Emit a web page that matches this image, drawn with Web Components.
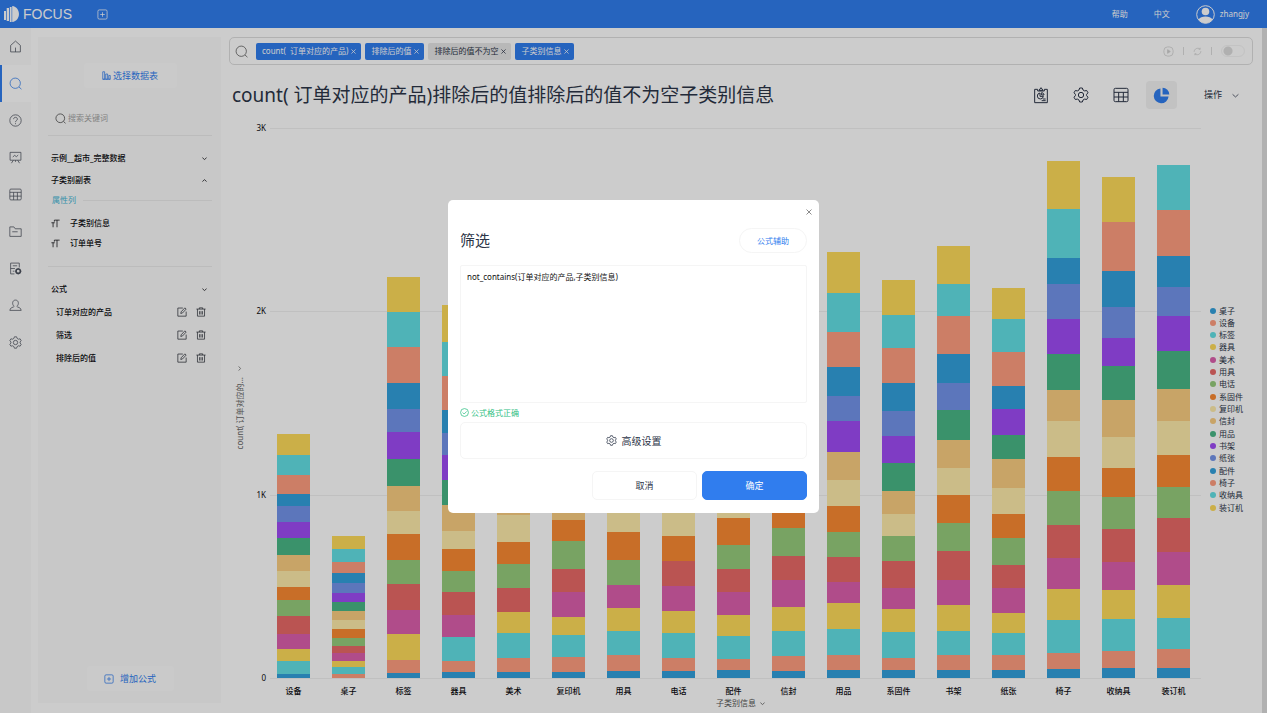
<!DOCTYPE html>
<html lang="zh-CN">
<head>
<meta charset="utf-8">
<title>FOCUS</title>
<style>
  body {
    margin: 0;
    font: 8px/12px "Noto Sans", "Noto Sans CJK SC", sans-serif;
    color: #0c0c10;
    background: #fff;
    --blue: #307dee;
    --ink: #2c3548;
    --soft: #fafafa;
    --line: #ececec;
  }
</style>
</head>
<body>
<focus-app></focus-app>
<script>
const define = (name, html, setup) => {
  const tpl = document.createElement('template');
  tpl.innerHTML = html;
  customElements.define(name, class extends HTMLElement {
    constructor() {
      super();
      this.attachShadow({ mode: 'open' }).append(tpl.content.cloneNode(true));
    }
    connectedCallback() { if (setup) setup(this, this.shadowRoot); }
  });
};

/* Line icons on a 24-unit grid. */
const GEAR = '<path d="M9 4.500 10 1.500h4l1 3 2.500 1.400 3-.7 2 3.500-2.100 2.300v2l2.100 2.300-2 3.500-3-.7L15 19.500l-1 3h-4l-1-3-2.500-1.400-3 .7-2-3.500 2.100-2.300v-2L1.500 8.700l2-3.500 3 .7z"/><circle cx="12" cy="12" r="4"/>';
const ICONS = {
  home: '<path d="M3 10 12 2l9 8v12H3zM12 22v-8"/>',
  search: '<circle cx="11.500" cy="11.500" r="9.500"/><path d="m18.500 18.500 4.500 4"/>',
  help: '<circle cx="12" cy="12" r="10.500"/><path d="M8.500 9.500c0-4.500 7-4.500 7 0 0 2.500-3.500 2.500-3.500 5.500M12 17v1.800"/>',
  board: '<path d="M2 2.500h20v14.500H2zM4.500 22.500 8 17m11.500 5.500L16 17M12 17v3M7 11l3.500-3 3 2.500L17 7.500"/>',
  table: '<rect x="1.500" y="2" width="21" height="20" rx="2"/><path d="M1.500 8h21M1.500 15h21M8.500 8v14M15.500 8v14"/>',
  folder: '<path d="M1.500 21V3.500h7.500l2.500 3.500h11v14zM6 12.500h10"/>',
  doc: '<path d="M19 10V2H3v20h7M7 7h8M3 12h8M7 17h3"/><circle cx="17" cy="17" r="4" stroke-width="3"/><path d="M17 11v2m0 8v2m-6-6h2m8 0h2"/>',
  user: '<path d="M9.500 13.500C5 10 6 2 12 2s7 8 2.500 11.500c0 2 8 1.500 8 7.500h-21c0-6 8-5.500 8-7.500z"/>',
  gear: GEAR,
  plusbox: '<rect x="2" y="2" width="20" height="20" rx="3"/><path d="M12 7v10M7 12h10"/>',
  down: '<path d="m2 8 10 9 10-9"/>',
  up: '<path d="m2 17 10-9 10 9"/>',
  close: '<path d="m2 2 20 20M22 2 2 22"/>',
  bars: '<path d="M2 2v20h5V2zM10 22V8h5v14zM18 22V12h4v10zM2 22h20"/>',
  text: '<path d="M9 3h14M16 3v19M1 10h9M5.500 10v12M9 3v4"/>',
  edit: '<path d="M14 2.500H2V22h20V11M9 15.500l1-4L19 2l3 3-9 9.500z"/>',
  trash: '<path d="M1 5h22M8 5V2h8v3M3.500 5v17h17V5M8.500 10v8M12 10v8M15.500 10v8"/>',
  play: '<rect x="2" y="2" width="20" height="20" rx="8"/><path d="M10 8v8l6-4z" fill="currentColor"/>',
  refresh: '<path d="M3 13C3 5 13 0 19 6V2M21 11c0 8-10 13-16 7v4M19 6h-4M5 18h4"/>',
  clipboard: '<path d="M7 3.500H2.500v20h19v-20H17M9 5l3-4 3 4zM7 3.500V6h10V3.500M10.500 9a4.500 4.500 0 1 0 5 5h-5zM13 8.500c2 0 3.500 1.500 3.500 3.500H13zM15 18h4M13 20.500h6"/>',
  pie: '<path fill="currentColor" stroke="none" d="M10.500 2A10.500 10.500 0 1 0 22 13.500H10.500z"/><path fill="currentColor" stroke="none" d="M13.500 1v9.500H23A9.500 9.500 0 0 0 13.500 1z"/>',
  ok: '<circle cx="12" cy="12" r="10.500"/><path d="m7 12 4 4 7-7"/>'
};
define('ui-icon', `
  <style>
    :host { display: block; flex: none; }
    svg { display: block; width: 100%; height: 100%; fill: none; stroke: currentColor; overflow: visible; }
  </style>
  <svg viewBox="0 0 24 24" aria-hidden="true"></svg>`, (host, root) => {
  const size = Number(host.getAttribute('size') || 12);
  const svg = root.querySelector('svg');
  host.style.width = host.style.height = size + 'px';
  svg.setAttribute('stroke-width', (size > 14 ? 1 : .75) * 24 / size);
  svg.innerHTML = ICONS[host.getAttribute('name')];
});

define('app-header', `
  <style>
    :host { display: flex; align-items: center; height: 28px; background: var(--blue); color: #fff; padding: 0 18px 0 4px; }
    .logo { width: 15px; height: 16px; margin-right: 4px; }
    .brand { font: 14px/28px "Liberation Sans", sans-serif; margin-right: 25px; }
    button { border: 0; background: none; color: inherit; padding: 0; }
    nav { margin-left: auto; display: flex; align-items: center; gap: 26px; }
    a { color: inherit; text-decoration: none; }
    .me { display: flex; align-items: center; gap: 5px; }
  </style>
  <svg class="logo" viewBox="0 0 15 16" aria-hidden="true"><path fill="#fff" d="M0 5h2v9H0zM2.700 2h2.300v13H2.700zM5.800 1h1.800v15H5.800zM8.200 0c9 1 9 15 0 16z"/></svg>
  <span class="brand">FOCUS</span>
  <button aria-label="新建"><ui-icon name="plusbox" size="11"></ui-icon></button>
  <nav>
    <a href="#">帮助</a><a href="#">中文</a>
    <span class="me">
      <svg width="19" height="19" viewBox="0 0 19 19" aria-hidden="true"><circle cx="9.500" cy="9.500" r="8.800" fill="none" stroke="#fff"/><circle cx="9.500" cy="6.500" r="3.800" fill="#fff"/><path fill="#fff" d="M2.500 14.500c2-4 12-4 14 0-3.500 5-10.500 5-14 0z"/></svg>
      <span>zhangjy</span>
    </span>
  </nav>`);

define('nav-rail', `
  <style>
    :host { display: block; width: 31px; background: var(--soft); color: #4c525e; }
    a { display: flex; align-items: center; justify-content: center; height: 37px; color: inherit; }
    a.on { background: #fff; color: var(--blue); box-shadow: inset 2px 0 var(--blue); }
  </style>
  <nav></nav>`, (host, root) => {
  const items = [['home', '首页'], ['search', '搜索'], ['help', '问答'], ['board', '看板'], ['table', '数据表'], ['folder', '资源'], ['doc', '任务'], ['user', '用户'], ['gear', '设置']];
  root.querySelector('nav').innerHTML = items.map(([n, t]) =>
    `<a href="#" aria-label="${t}"${n === 'search' ? ' class="on"' : ''}><ui-icon name="${n}" size="13"></ui-icon></a>`).join('');
});

define('formula-row', `
  <style>
    :host { display: flex; align-items: center; height: 23px; padding: 0 6px 0 8px; }
    span { flex: 1; }
    button { border: 0; background: none; padding: 0; color: #30343c; }
    button + button { margin-left: 9px; }
  </style>
  <span><slot></slot></span>
  <button aria-label="编辑"><ui-icon name="edit" size="10"></ui-icon></button>
  <button aria-label="删除"><ui-icon name="trash" size="10"></ui-icon></button>`);

define('data-panel', `
  <style>
    :host { display: flex; flex-direction: column; box-sizing: border-box; width: 183px; margin: 9px 0 10px 7px; padding: 26px 9px 12px 10px; background: var(--soft); }
    button { font: inherit; color: inherit; border: 0; background: none; padding: 0; display: flex; align-items: center; }
    .action { align-self: center; justify-content: center; height: 25px; font-size: 9px; color: var(--blue); background: #fdfdfd; border-radius: 3px; }
    .pick { width: 93px; gap: 2px; }
    .add { width: 87px; gap: 6px; margin-top: auto; }
    .find { display: flex; align-items: center; gap: 2px; height: 34px; margin-top: 13px; padding-left: 7px; border-bottom: 1px solid var(--line); color: #444; }
    input { border: 0; background: none; padding: 0; font: inherit; min-width: 0; flex: 1; outline: 0; }
    input::placeholder { color: #a4a4a4; }
    .head { width: 100%; height: 22px; padding: 0 5px 0 3px; justify-content: space-between; font-weight: 500; }
    .find + .head, hr + .head { margin-top: 11px; }
    .group { display: flex; align-items: center; gap: 7px; height: 18px; margin-bottom: 4px; padding-left: 4px; color: #45b7d6; }
    .group::after { content: ""; flex: 1; border-top: 1px solid var(--line); }
    .attr { display: flex; align-items: center; gap: 10px; height: 20px; padding-left: 3px; font-weight: 500; }
    hr { border: 0; border-top: 1px solid var(--line); width: 100%; margin: 13px 0 0; }
    formula-row { font-weight: 500; }
  </style>
  <button class="action pick"><ui-icon name="bars" size="9"></ui-icon>选择数据表</button>
  <label class="find"><ui-icon name="search" size="11"></ui-icon><input placeholder="搜索关键词"></label>
  <button class="head">示例__超市_完整数据<ui-icon name="down" size="5"></ui-icon></button>
  <button class="head">子类别副表<ui-icon name="up" size="5"></ui-icon></button>
  <div class="group">属性列</div>
  <div class="attr"><ui-icon name="text" size="9"></ui-icon>子类别信息</div>
  <div class="attr"><ui-icon name="text" size="9"></ui-icon>订单单号</div>
  <hr>
  <button class="head">公式<ui-icon name="down" size="5"></ui-icon></button>
  <formula-row>订单对应的产品</formula-row>
  <formula-row>筛选</formula-row>
  <formula-row>排除后的值</formula-row>
  <button class="action add"><ui-icon name="plusbox" size="10"></ui-icon>增加公式</button>`);

define('query-chip', `
  <style>
    :host { display: flex; align-items: center; gap: 3px; height: 17px; padding: 0 5px 0 6px; border-radius: 2px; background: var(--blue); color: #fff; }
    :host([muted]) { background: #e6e6e6; color: var(--ink); }
    span { white-space: pre; }
    button { border: 0; background: none; padding: 0; color: inherit; }
  </style>
  <span><slot></slot></span><button aria-label="移除"><ui-icon name="close" size="5"></ui-icon></button>`);

define('query-bar', `
  <style>
    :host { display: flex; align-items: center; box-sizing: border-box; height: 28px; padding: 0 7px 0 5px; border: 1px solid #dedede; border-radius: 5px; }
    .find { color: #555; }
    .chips { display: flex; gap: 4px; margin-left: 8px; }
    .chips query-chip { white-space: pre; }
    .tools { display: flex; align-items: center; gap: 9px; margin-left: auto; color: #d0d0d0; }
    .tools button { border: 0; background: none; padding: 0; color: inherit; }
    i { width: 1px; height: 8px; background: #dcdcdc; }
    input { appearance: none; margin: 0; width: 24px; height: 12px; border-radius: 6px; border: 1px solid #f4f4f4; background: radial-gradient(circle at 6px 5px, #dcdcdc 4px, transparent 5px); }
  </style>
  <ui-icon class="find" name="search" size="13"></ui-icon>
  <div class="chips">
    <query-chip>count(&nbsp; 订单对应的产品)</query-chip>
    <query-chip>排除后的值</query-chip>
    <query-chip muted>排除后的值不为空</query-chip>
    <query-chip>子类别信息</query-chip>
  </div>
  <div class="tools">
    <button aria-label="运行"><ui-icon name="play" size="11"></ui-icon></button><i></i>
    <button aria-label="刷新"><ui-icon name="refresh" size="9"></ui-icon></button><i></i>
    <input type="checkbox" role="switch" aria-label="自动">
  </div>`.replace('    .chips query-chip { white-space: pre; }\n', ''));

define('chart-toolbar', `
  <style>
    :host { display: flex; align-items: center; margin-top: 16px; padding: 0 14px 0 3px; color: var(--ink); }
    h1 { flex: 1; margin: 0; font-size: 19px; line-height: 28px; font-weight: 400; white-space: nowrap; }
    .views { display: flex; gap: 9px; margin-right: 27px; }
    button { border: 0; background: none; padding: 0; color: inherit; font: inherit; display: flex; align-items: center; justify-content: center; }
    .views button { width: 31px; height: 28px; border-radius: 4px; }
    .views .on { background: #f3f3f3; color: var(--blue); }
    .ops { font-size: 9px; gap: 10px; }
  </style>
  <h1>count( 订单对应的产品)排除后的值排除后的值不为空子类别信息</h1>
  <div class="views">
    <button aria-label="报告"><ui-icon name="clipboard" size="16"></ui-icon></button>
    <button aria-label="配置"><ui-icon name="gear" size="16"></ui-icon></button>
    <button aria-label="表格"><ui-icon name="table" size="16"></ui-icon></button>
    <button class="on" aria-label="图表"><ui-icon name="pie" size="17"></ui-icon></button>
  </div>
  <button class="ops">操作<ui-icon name="down" size="7"></ui-icon></button>`);

/* Series from the bottom of each stack to its top. */
const C = { B: '#32a1dc', S: '#ff9e80', T: '#63e0e5', Y: '#fedb5a', M: '#dc60ad', R: '#e96967', E: '#97cc7c', O: '#fa8a32', L: '#feecab', N: '#fbcd81', G: '#49b786', P: '#9f4bf5', I: '#7494ea' };
const NAMES = '桌子 设备 标签 器具 美术 用具 电话 系固件 复印机 信封 用品 书架 纸张 配件 椅子 收纳具 装订机'.split(' ');
const SERIES = 'BSTYMREOLNGPIBSTY';
const FULL = 1650;
/* [category, index of the series it leaves out, running totals from the top down] */
const STACKS = [
  ['设备', 1, [733,669,609,552,515,468,421,369,322,273,234,187,132,87,50,11]],
  ['桌子', 0, [426,386,349,315,285,255,228,201,174,147,121,96,74,51,32,13]],
  ['标签', 2, [1203,1098,993,885,806,737,657,577,502,433,355,282,205,131,55,16]],
  ['器具', 3, [1119,1007,907,803,735,669,594,518,442,387,321,258,189,123,51,18]],
  ['美术', 4, [1130,1030,930,835,765,700,630,565,490,407,343,269,199,135,61,18]],
  ['复印机', 8, [1160,1060,960,860,780,705,630,550,474,412,328,258,184,130,63,19]],
  ['用具', 5, [1180,1080,980,885,810,735,660,590,515,437,354,280,211,142,69,20]],
  ['电话', 6, [1170,1070,970,875,800,725,650,580,505,427,351,277,200,135,60,21]],
  ['配件', 13, [1180,1080,980,880,800,720,640,555,480,398,326,257,189,126,56,23]],
  ['信封', 9, [1220,1120,1020,920,840,765,690,615,540,449,367,294,212,140,67,22]],
  ['用品', 10, [1277,1156,1039,933,847,770,678,593,517,437,363,289,225,147,69,24]],
  ['系固件', 7, [1195,1089,990,885,801,726,646,562,492,426,351,271,207,137,61,24]],
  ['书架', 11, [1295,1183,1086,972,886,803,713,630,549,466,381,293,218,142,69,25]],
  ['纸张', 12, [1170,1077,978,875,807,728,656,569,491,419,338,270,196,135,69,25]],
  ['椅子', 14, [1550,1406,1261,1181,1077,972,864,770,663,560,459,360,266,174,76,28]],
  ['收纳具', 15, [1503,1367,1221,1113,1020,936,833,723,630,543,446,347,264,176,80,29]],
  ['装订机', 16, [1539,1405,1266,1172,1086,981,867,770,668,574,480,378,279,181,88,30]]
];
define('stacked-chart', `
  <style>
    :host { flex: 1; display: grid; grid-template: 1fr 20px 10px / 21px 16px 1fr 52px; min-height: 400px; padding: 19px 0 5px; }
    .y { grid-area: 1 / 1; align-self: center; justify-self: center; margin-top: 10px; display: flex; flex-direction: column; align-items: center; gap: 6px; color: #666; }
    .y span { writing-mode: vertical-rl; text-orientation: sideways; transform: rotate(180deg); white-space: nowrap; }
    .y ui-icon { transform: rotate(-90deg); }
    .ticks, .grid { display: flex; flex-direction: column; justify-content: space-between; }
    .ticks { grid-area: 1 / 2; }
    .ticks span { height: 0; display: flex; align-items: center; justify-content: flex-end; }
    .grid { grid-area: 1 / 3; margin-left: 4px; }
    .grid i { height: 0; border-top: 1px solid #f0f0f0; margin-bottom: -1px; }
    .bars, .names { display: flex; }
    .bars { grid-area: 1 / 3; align-items: flex-end; }
    .bars div { flex: 1; height: 100%; display: flex; flex-direction: column; justify-content: flex-end; align-items: center; }
    .bars b { width: 60%; }
    .names { grid-area: 2 / 3; align-items: center; padding-top: 6px; }
    .names span { flex: 1; text-align: center; font-weight: 500; }
    .x { grid-area: 3 / 3; display: flex; justify-content: center; align-items: center; gap: 4px; padding-left: 14px; color: #555; }
    ul { grid-area: 1 / 4; align-self: center; height: 38%; margin: 12px 0 0; padding: 0 0 0 9px; list-style: none; display: flex; flex-direction: column; justify-content: space-between; color: var(--ink); }
    li { display: flex; align-items: center; gap: 3px; white-space: nowrap; }
    li i { width: 6px; height: 6px; border-radius: 50%; }
  </style>
  <div class="y"><ui-icon name="down" size="5"></ui-icon><span>count( 订单对应的...</span></div>
  <div class="ticks"><span>3K</span><span>2K</span><span>1K</span><span>0</span></div>
  <div class="grid"><i></i><i></i><i></i><i></i></div>
  <div class="bars"></div>
  <div class="names"></div>
  <div class="x"><span>子类别信息</span><ui-icon name="down" size="5"></ui-icon></div>
  <ul></ul>`, (host, root) => {
  root.querySelector('.bars').innerHTML = STACKS.map(([, skip, tops]) => {
    const keys = [...SERIES].filter((k, i) => i !== skip).reverse();
    return '<div>' + tops.map((t, i) =>
      `<b style="height:${((t - (tops[i + 1] || 0)) / FULL * 100).toFixed(3)}%;background:${C[keys[i]]}"></b>`).join('') + '</div>';
  }).join('');
  root.querySelector('.names').innerHTML = STACKS.map(s => `<span>${s[0]}</span>`).join('');
  root.querySelector('ul').innerHTML = NAMES.map((n, i) => `<li><i style="background:${C[SERIES[i]]}"></i>${n}</li>`).join('');
});

define('formula-dialog', `
  <style>
    :host { position: fixed; inset: 0; display: grid; place-items: center; background: rgba(0, 0, 0, .2); color: var(--ink); }
    dialog { position: static; display: block; box-sizing: border-box; width: 371px; max-width: 100%; margin: 0; padding: 8px 12px 13px; border: 0; border-radius: 5px; background: #fff; color: inherit; }
    button { box-sizing: border-box; font: inherit; color: inherit; background: #fff; border: 1px solid #f5f5f5; border-radius: 5px; padding: 0; cursor: pointer; }
    .close { display: block; border: 0; margin: 0 -6px 0 auto; padding: 1px; color: #666; }
    header { display: flex; align-items: center; justify-content: space-between; margin-top: 12px; }
    h2 { margin: 0; font-size: 15px; line-height: 25px; font-weight: 400; }
    .help { width: 68px; height: 25px; border-radius: 13px; color: var(--blue); }
    textarea { display: block; box-sizing: border-box; width: 100%; height: 138px; margin-top: 12px; padding: 5px 6px; border: 1px solid #f5f5f5; border-radius: 2px; font: inherit; color: #111; resize: none; outline: 0; }
    .status { display: flex; align-items: center; gap: 2px; height: 19px; margin: 0; color: #2fc083; }
    .more { width: 100%; height: 37px; display: flex; align-items: center; justify-content: center; gap: 5px; font-size: 10px; }
    footer { display: flex; justify-content: flex-end; gap: 5px; margin-top: 12px; }
    footer button { width: 105px; height: 29px; font-size: 9px; }
    .go { background: var(--blue); border-color: var(--blue); color: #fff; }
  </style>
  <dialog open aria-labelledby="t">
    <button class="close" aria-label="关闭"><ui-icon name="close" size="6"></ui-icon></button>
    <header><h2 id="t">筛选</h2><button class="help">公式辅助</button></header>
    <textarea aria-label="公式" spellcheck="false">not_contains(订单对应的产品,子类别信息)</textarea>
    <p class="status"><ui-icon name="ok" size="9"></ui-icon>公式格式正确</p>
    <button class="more"><ui-icon name="gear" size="11"></ui-icon>高级设置</button>
    <footer><button>取消</button><button class="go">确定</button></footer>
  </dialog>`);

define('focus-app', `
  <style>
    :host { display: flex; flex-direction: column; min-height: 100vh; }
    .body { flex: 1; display: flex; }
    main { flex: 1; min-width: 0; display: flex; flex-direction: column; padding: 9px 9px 0 8px; }
    .track { width: 5px; background: #dedede; }
  </style>
  <app-header></app-header>
  <div class="body">
    <nav-rail></nav-rail>
    <data-panel></data-panel>
    <main>
      <query-bar></query-bar>
      <chart-toolbar></chart-toolbar>
      <stacked-chart></stacked-chart>
    </main>
    <div class="track"></div>
  </div>
  <formula-dialog></formula-dialog>`);
</script>
</body>
</html>
